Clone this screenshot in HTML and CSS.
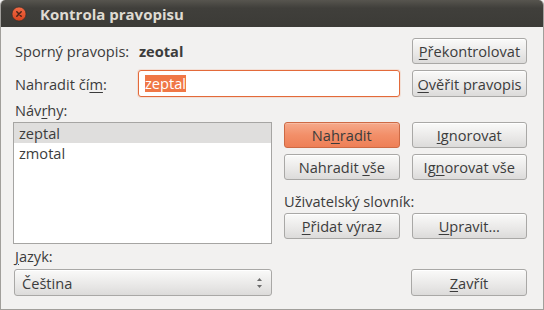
FILE: index.html
```html
<!DOCTYPE html>
<html lang="cs">
<head>
    <meta charset="UTF-8">
    <meta name="viewport" content="width=device-width, initial-scale=1.0">
    <title>Kontrola pravopisu</title>
    <link rel="stylesheet" href="styles.css">
</head>
<body>
    <div class="window">
        <div class="titlebar">
            <svg class="close-icon" width="16" height="16" viewBox="0 0 16 16">
                <defs>
                    <linearGradient id="closeGrad" x1="0" y1="0" x2="0" y2="1">
                        <stop offset="0" stop-color="#f26b46"/>
                        <stop offset="1" stop-color="#d9441f"/>
                    </linearGradient>
                </defs>
                <circle cx="8" cy="8" r="7" fill="url(#closeGrad)" stroke="#2e2d2a" stroke-width="0.6"/>
                <path d="M5.8 5.8 L10.2 10.2 M10.2 5.8 L5.8 10.2" stroke="#4a2418" stroke-width="1.5" stroke-linecap="round"/>
            </svg>
            <span class="title">Kontrola pravopisu</span>
        </div>

        <div class="content">
            <div class="row">
                <span class="label">Sporný pravopis:</span>
                <span class="word">zeotal</span>
                <button class="btn btn-side"><u>P</u>řekontrolovat</button>
            </div>

            <div class="row row-tall">
                <span class="label">Nahradit čí<u>m</u>:</span>
                <div class="entry"><span class="selected">zeptal</span></div>
                <button class="btn btn-side"><u>O</u>věřit pravopis</button>
            </div>

            <div class="lower">
                <div class="caption caption-top">Náv<u>r</u>hy:</div>
                <ul class="list">
                    <li class="active">zeptal</li>
                    <li>zmotal</li>
                </ul>

                <div class="actions">
                    <div class="btn-grid">
                        <button class="btn btn-default">Na<u>h</u>radit</button>
                        <button class="btn"><u>I</u>gnorovat</button>
                        <button class="btn">Nahradit <u>v</u>še</button>
                        <button class="btn">Ig<u>n</u>orovat vše</button>
                    </div>
                    <div class="dict-label">Uživatelský slovník:</div>
                    <div class="btn-grid">
                        <button class="btn"><u>P</u>řidat výraz</button>
                        <button class="btn"><u>U</u>pravit…</button>
                    </div>
                </div>

                <div class="caption caption-bottom"><u>J</u>azyk:</div>
                <div class="combo">
                    <span>Čeština</span>
                    <span class="spin">
                        <svg width="7" height="12" viewBox="0 0 7 12">
                            <path d="M3.5 1 L6 4 L1 4 Z" fill="#6b6b6b"/>
                            <path d="M3.5 11 L6 8 L1 8 Z" fill="#6b6b6b"/>
                        </svg>
                    </span>
                </div>
                <button class="btn btn-close"><u>Z</u>avřít</button>
            </div>
        </div>
    </div>
</body>
</html>
```

FILE: styles.css
```css
/* Reset styles */
* {
    margin: 0;
    padding: 0;
    box-sizing: border-box;
}

body {
    font-family: "Open Sans", "DejaVu Sans", sans-serif;
    font-size: 14.6px;
    color: #3c3c3c;
    background-color: #f2f1f0;
}

u {
    text-decoration: underline;
    text-underline-offset: 2px;
}

/* Window frame */
.window {
    width: 544px;
    height: 310px;
    background-color: #f2f1f0;
    border: 1px solid #a19f9b;
    border-top: none;
    border-radius: 5px 5px 0 0;
    overflow: hidden;
}

.titlebar {
    height: 27px;
    display: flex;
    align-items: center;
    padding-left: 11px;
    background: linear-gradient(#57554f, #403f3b 30%, #3c3b37);
    border-radius: 5px 5px 0 0;
    margin: 0 -1px;
}

.close-icon {
    margin-top: 1px;
}

.title {
    margin-left: 13px;
    color: #dfdbd2;
    font-weight: bold;
    font-size: 15px;
}

/* Content */
.content {
    padding: 11px 16px 0 12px;
}

.row {
    display: flex;
    align-items: center;
    height: 26px;
}

.row-tall {
    height: 27px;
    margin-top: 6px;
}

.label {
    width: 125px;
    padding-left: 2px;
    flex-shrink: 0;
}

.word {
    flex: 1;
    font-weight: bold;
    padding-left: 1px;
}

.btn {
    height: 26px;
    font-family: inherit;
    font-size: 14.6px;
    color: #3c3c3c;
    background: linear-gradient(#fafaf9, #e9e8e7 60%, #dcdbda);
    border: 1px solid #a9a8a6;
    border-radius: 3px;
    box-shadow: inset 0 1px 0 #ffffff;
}

.btn-side {
    width: 115px;
    margin-left: auto;
}

.row-tall .btn-side {
    height: 27px;
}

.entry {
    width: 262px;
    height: 27px;
    background-color: #fff;
    border: 1px solid #e36a3a;
    border-radius: 3px;
    box-shadow: 0 0 0 1px rgba(240, 119, 70, 0.15);
    padding-left: 6px;
    display: flex;
    align-items: center;
}

.selected {
    background-color: #f07746;
    color: #fff;
    line-height: 17px;
    height: 17px;
}

/* Lower part */
.lower {
    display: grid;
    grid-template-columns: 259px 1fr;
    column-gap: 12px;
    grid-template-areas:
        "cap1 ."
        "list actions"
        "cap2 ."
        "combo close";
    margin-top: 4px;
}

.caption {
    height: 18px;
    line-height: 18px;
    padding-left: 2px;
}

.caption-top {
    grid-area: cap1;
    margin-bottom: 3px;
}

.caption-bottom {
    grid-area: cap2;
    margin-top: 3px;
    margin-bottom: 4px;
}

.list {
    grid-area: list;
    height: 122px;
    list-style: none;
    background-color: #fff;
    border: 1px solid #a6a5a3;
}

.list li {
    height: 20px;
    line-height: 20px;
    padding-left: 5px;
}

.list li.active {
    background-color: #dfdedd;
}

.actions {
    grid-area: actions;
}

.btn-grid {
    display: grid;
    grid-template-columns: 1fr 1fr;
    column-gap: 12px;
    row-gap: 6px;
}

.btn-default {
    background: linear-gradient(#f6a98a, #f28f69 50%, #ee7f57);
    border-color: #cd6a45;
    box-shadow: inset 0 1px 0 #f8bba2;
}

.dict-label {
    height: 18px;
    line-height: 18px;
    margin: 12px 0 3px;
}

.combo {
    grid-area: combo;
    margin-left: 1px;
    height: 27px;
    display: flex;
    align-items: center;
    justify-content: space-between;
    padding: 0 8px 0 7px;
    background: linear-gradient(#fafaf9, #e9e8e7 60%, #dcdbda);
    border: 1px solid #a9a8a6;
    border-radius: 3px;
    box-shadow: inset 0 1px 0 #ffffff;
}

.spin {
    display: flex;
}

.btn-close {
    grid-area: close;
    justify-self: end;
    width: 116px;
    height: 27px;
}
```
